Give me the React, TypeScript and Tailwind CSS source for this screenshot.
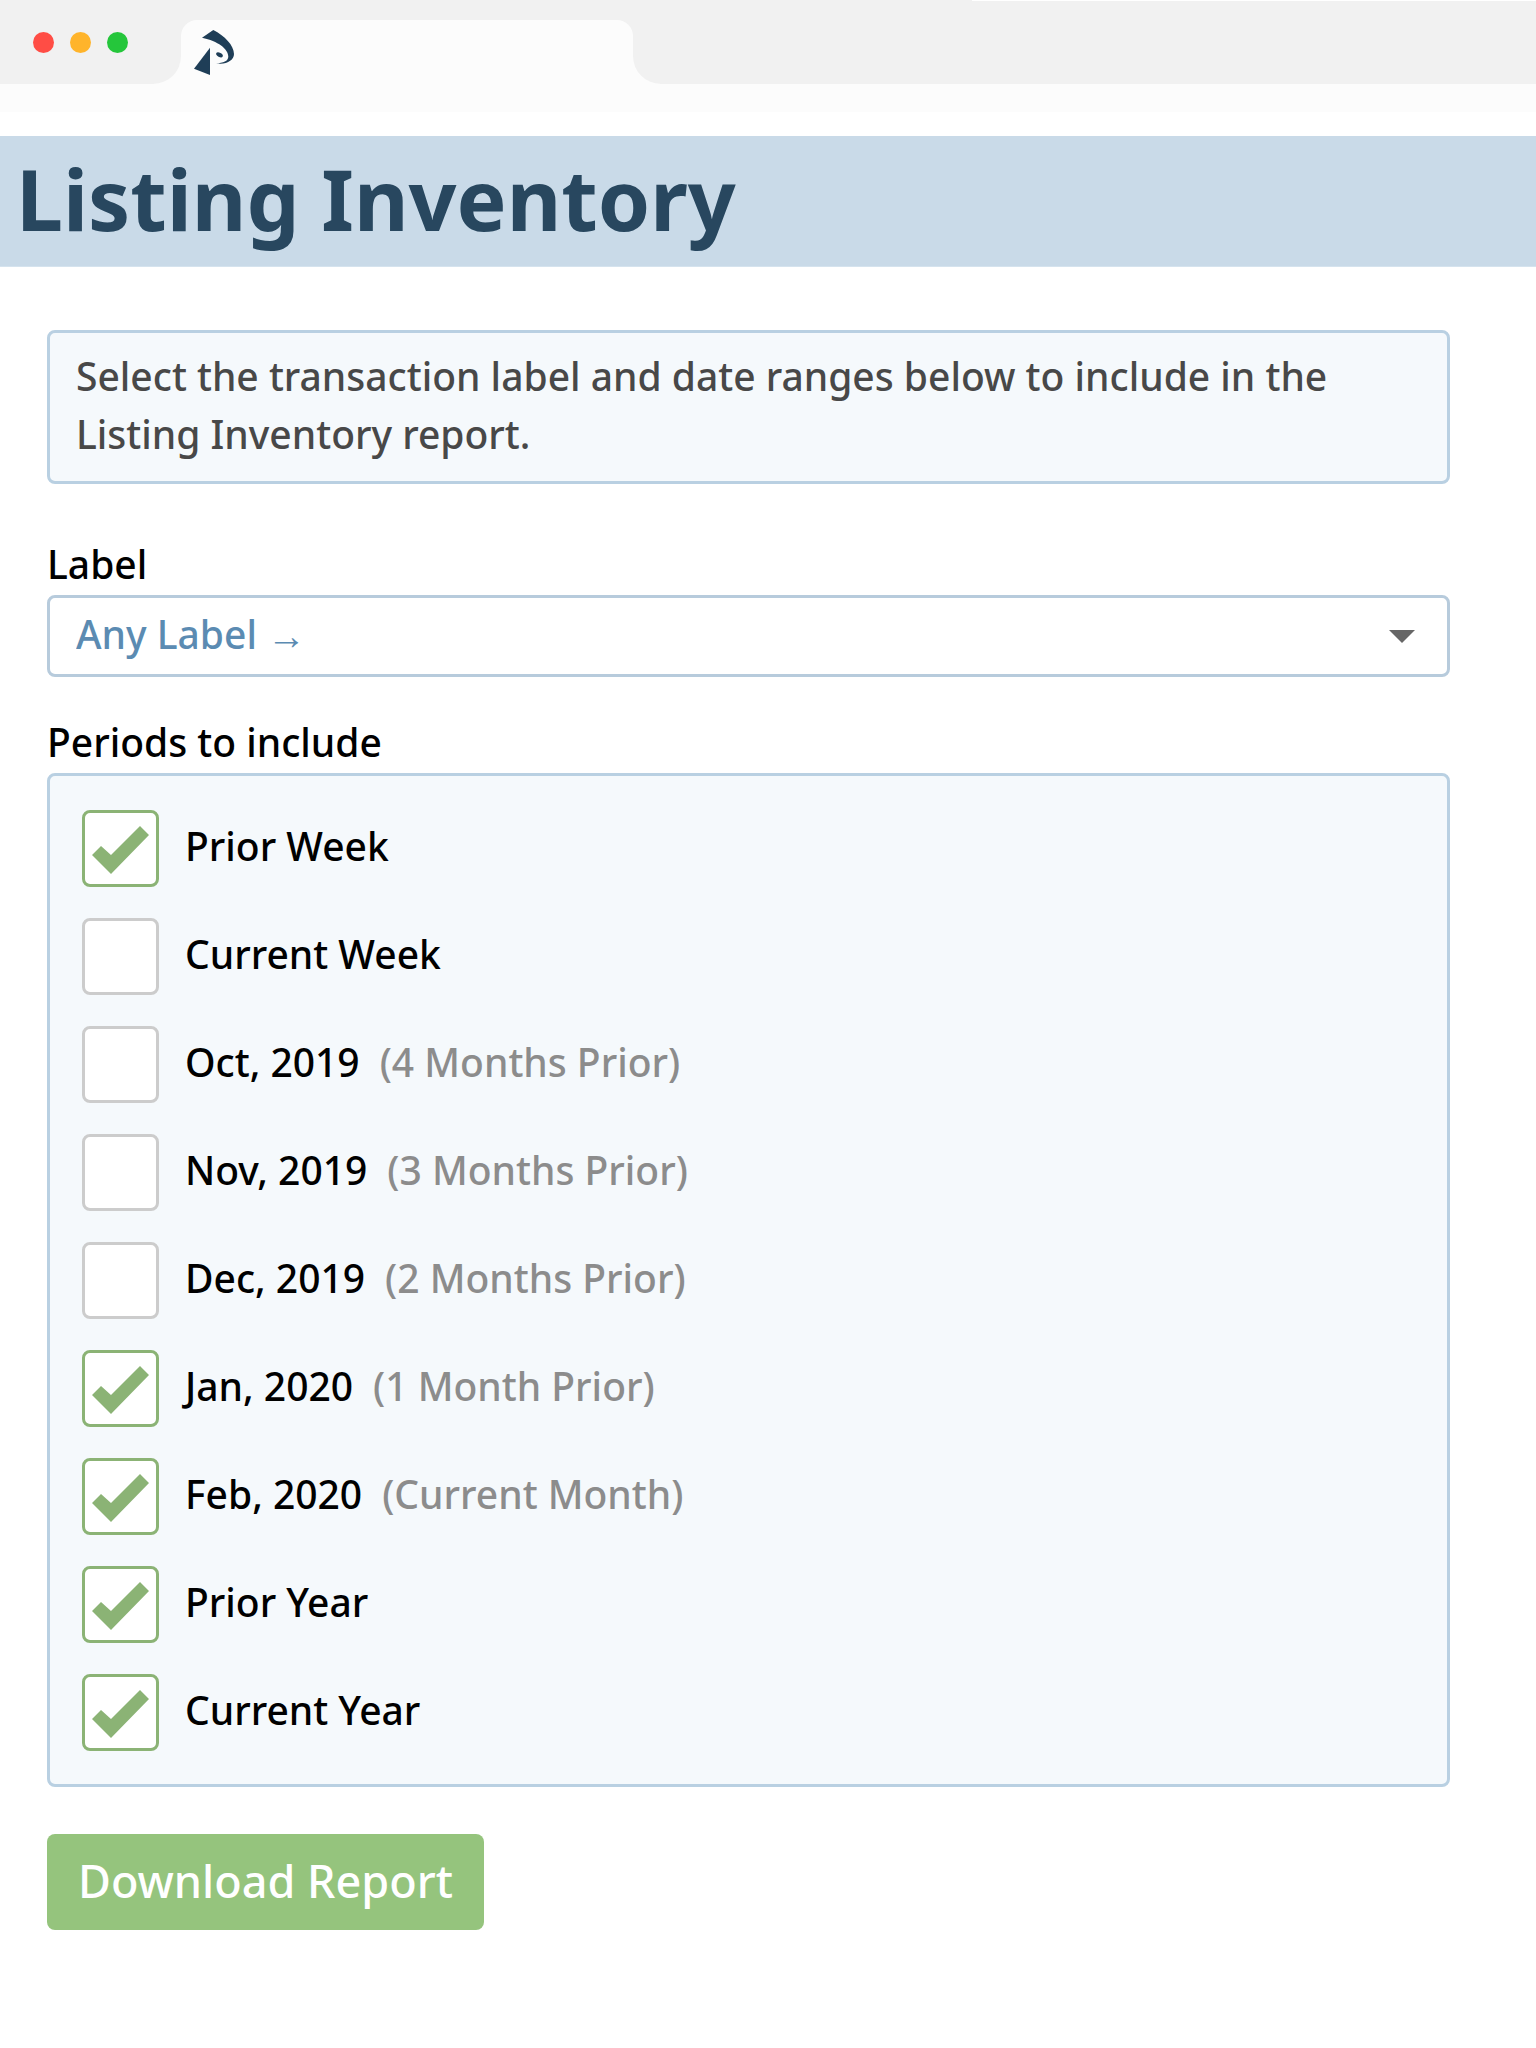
import { useState } from 'react';

interface Period {
  id: string;
  name: string;
  note?: string;
}

const periods: Period[] = [
  { id: 'prior-week', name: 'Prior Week' },
  { id: 'current-week', name: 'Current Week' },
  { id: '2019-10', name: 'Oct, 2019', note: '(4 Months Prior)' },
  { id: '2019-11', name: 'Nov, 2019', note: '(3 Months Prior)' },
  { id: '2019-12', name: 'Dec, 2019', note: '(2 Months Prior)' },
  { id: '2020-01', name: 'Jan, 2020', note: '(1 Month Prior)' },
  { id: '2020-02', name: 'Feb, 2020', note: '(Current Month)' },
  { id: 'prior-year', name: 'Prior Year' },
  { id: 'current-year', name: 'Current Year' },
];

function Logo() {
  return (
    <svg viewBox="0 0 40 45" className="h-[45px] w-10" fill="#1f3e57" aria-hidden="true">
      <path d="M19.3 0 8 7.7C24 11 34.3 19 34.3 26.5c0 4.5-5 6.8-12.3 6.8 10.5 1.7 18-3 18-9.300C40 15.5 30.5 5.5 19.3 0z" />
      <path d="M16 17.7V45L0 38.7z" />
      <ellipse cx="25.5" cy="24.8" rx="3.6" ry="2.1" transform="rotate(28 25.5 24.8)" />
    </svg>
  );
}

function BrowserBar() {
  return (
    <div className="bg-[#fcfcfc] pb-7">
      <div className="flex h-[84px]">
        <div className="flex w-[181px] shrink-0 gap-4 rounded-br-[28px] bg-[#f1f1f1] pl-[33px] pt-8">
          <span className="size-[21px] rounded-full bg-[#ff4d45]" />
          <span className="size-[21px] rounded-full bg-[#ffb42b]" />
          <span className="size-[21px] rounded-full bg-[#25c63b]" />
        </div>
        <div className="w-[452px] shrink-0 bg-[#f1f1f1] pt-5">
          <div className="h-16 rounded-t-2xl bg-[#fcfcfc] pl-[13px] pt-[10px]">
            <Logo />
          </div>
        </div>
        <div className="flex-1 rounded-bl-[28px] bg-[#f1f1f1]">
          <div className="ml-auto h-px w-5/8 bg-white" />
        </div>
      </div>
    </div>
  );
}

export default function App() {
  const [label, setLabel] = useState('any');
  const [selected, setSelected] = useState<string[]>([
    'prior-week',
    '2020-01',
    '2020-02',
    'prior-year',
    'current-year',
  ]);

  const toggle = (id: string) => {
    setSelected((current) =>
      current.includes(id) ? current.filter((item) => item !== id) : [...current, id]
    );
  };

  return (
    <div className="min-h-screen bg-white font-['Noto_Sans',sans-serif] text-[39px] font-medium text-black">
      <BrowserBar />

      {/* Title */}
      <header className="mt-6 border-b border-[#d5e3ee] bg-[#c9dae8] px-4 pt-3.5 pb-[18px]">
        <h1 className="text-[84px] font-bold leading-[98px] text-[#28475f]">Listing Inventory</h1>
      </header>

      <main className="pl-[47px] pr-[86px] pt-[63px]">
        <p className="rounded-lg border-[3px] border-[#b9d0e2] bg-[#f5f9fc] px-[26px] pt-3.5 pb-[18px] leading-[58px] text-[#484848]">
          Select the transaction label and date ranges below to include in the Listing Inventory report.
        </p>

        {/* Label */}
        <div className="mt-[53px]">
          <label htmlFor="label" className="block pb-1 leading-[54px]">
            Label
          </label>
          <div className="relative">
            <select
              id="label"
              value={label}
              onChange={(e) => setLabel(e.target.value)}
              className="block h-[82px] w-full appearance-none rounded-lg border-[3px] border-[#b7cbdc] bg-white px-[26px] pb-1 text-[#5b8bb2]"
            >
              <option value="any">Any Label →</option>
            </select>
            <svg
              viewBox="0 0 26 13"
              className="pointer-events-none absolute right-[35px] top-[35px] h-[13px] w-[26px]"
              fill="#666"
              aria-hidden="true"
            >
              <path d="M0 0h26L13 13z" />
            </svg>
          </div>
        </div>

        {/* Periods */}
        <fieldset className="mt-[38px]">
          <legend className="pb-1 leading-[54px]">Periods to include</legend>
          <div className="flex flex-col gap-[31px] rounded-lg border-[3px] border-[#b9d0e2] bg-[#f5f9fc] px-8 pt-[34px] pb-[33px]">
            {periods.map((period) => (
              <label key={period.id} className="flex items-center gap-[26px] leading-[58px]">
                <span className="grid shrink-0">
                  <input
                    type="checkbox"
                    checked={selected.includes(period.id)}
                    onChange={() => toggle(period.id)}
                    className="peer col-start-1 row-start-1 size-[77px] appearance-none rounded-lg border-[3px] border-[#cccccc] bg-white checked:border-[#8bb375]"
                  />
                  <svg
                    viewBox="0 0 77 77"
                    className="pointer-events-none invisible col-start-1 row-start-1 size-[77px] peer-checked:visible"
                    fill="#8bb375"
                    aria-hidden="true"
                  >
                    <path d="M10 45l9-9 10 9 29-29 9 9-38 39z" />
                  </svg>
                </span>
                <span className="pb-1.5">
                  {period.name}
                  {period.note && <span className="ml-5 text-[#8c8c8c]">{period.note}</span>}
                </span>
              </label>
            ))}
          </div>
        </fieldset>

        <button
          type="button"
          className="mt-[47px] rounded-lg bg-[#95c47d] px-[31px] pt-[15px] pb-[17px] text-[45px] leading-16 text-white"
        >
          Download Report
        </button>
      </main>
    </div>
  );
}
